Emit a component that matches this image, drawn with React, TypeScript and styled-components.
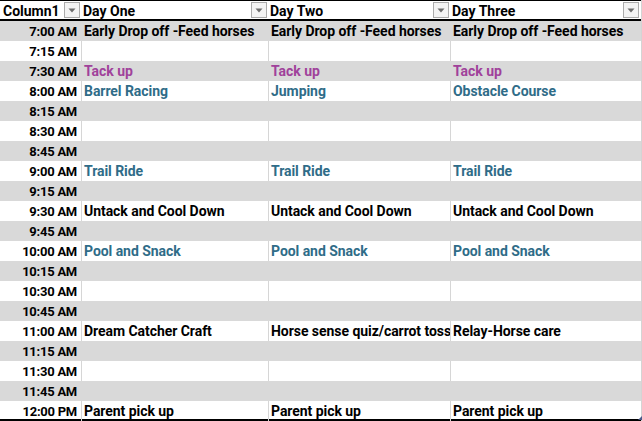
import styled, { createGlobalStyle } from "styled-components";

type Tone = "plain" | "tack" | "activity";

interface Slot {
  time: string;
  cells?: [string, string, string];
  tone?: Tone;
}

const slots: Slot[] = [
  { time: "7:00 AM", cells: ["Early Drop off -Feed horses", "Early Drop off -Feed horses", "Early Drop off -Feed horses"], tone: "plain" },
  { time: "7:15 AM" },
  { time: "7:30 AM", cells: ["Tack up", "Tack up", "Tack up"], tone: "tack" },
  { time: "8:00 AM", cells: ["Barrel Racing", "Jumping", "Obstacle Course"], tone: "activity" },
  { time: "8:15 AM" },
  { time: "8:30 AM" },
  { time: "8:45 AM" },
  { time: "9:00 AM", cells: ["Trail Ride", "Trail Ride", "Trail Ride"], tone: "activity" },
  { time: "9:15 AM" },
  { time: "9:30 AM", cells: ["Untack and Cool Down", "Untack and Cool Down", "Untack and Cool Down"], tone: "plain" },
  { time: "9:45 AM" },
  { time: "10:00 AM", cells: ["Pool and Snack", "Pool and Snack", "Pool and Snack"], tone: "activity" },
  { time: "10:15 AM" },
  { time: "10:30 AM" },
  { time: "10:45 AM" },
  { time: "11:00 AM", cells: ["Dream Catcher Craft", "Horse sense quiz/carrot toss", "Relay-Horse care"], tone: "plain" },
  { time: "11:15 AM" },
  { time: "11:30 AM" },
  { time: "11:45 AM" },
  { time: "12:00 PM", cells: ["Parent pick up", "Parent pick up", "Parent pick up"], tone: "plain" },
];

const headers = ["Column1", "Day One", "Day Two", "Day Three"];

const toneColors: Record<Tone, string> = {
  plain: "#000000",
  tack: "#a0419b",
  activity: "#2f6c88",
};

const GlobalStyle = createGlobalStyle`
  body {
    margin: 0;
    background: #ffffff;
    font-family: Roboto, "Liberation Sans", sans-serif;
  }
`;

const Sheet = styled.div`
  position: relative;
  width: 641px;
  border-right: 1px solid #d4d4d4;
`;

const Row = styled.div<{ $shaded?: boolean; $last?: boolean }>`
  display: grid;
  grid-template-columns: 81px 187px 182px 190px;
  height: 20px;
  box-sizing: border-box;
  background: ${(p) => (p.$shaded ? "#d9d9d9" : "#ffffff")};
  border-bottom: ${(p) => (p.$last ? "2px solid #000" : "none")};
`;

const HeaderRow = styled(Row)`
  height: 21px;
  border-top: 1px solid #000;
  border-bottom: 2px solid #000;
`;

const HeaderCell = styled.div`
  display: flex;
  align-items: center;
  justify-content: space-between;
  padding: 0 1px 0 3px;
  font-size: 14px;
  font-weight: 700;
  color: #000;
  white-space: nowrap;
  overflow: hidden;
  & + & {
    padding-left: 2px;
  }
`;

const HeaderLabel = styled.span`
  margin-top: 2px;
`;

const FilterButton = styled.span`
  display: flex;
  align-items: center;
  justify-content: center;
  width: 16px;
  height: 16px;
  box-sizing: border-box;
  border: 1px solid #ababab;
  background: #f3f3f3;
  flex-shrink: 0;
`;

const TimeCell = styled.div`
  padding-right: 4px;
  text-align: right;
  font-size: 13px;
  letter-spacing: -0.25px;
  font-weight: 700;
  line-height: 21px;
  color: #000;
  white-space: nowrap;
`;

const DayCell = styled.div<{ $shaded?: boolean; $color: string }>`
  padding-left: 2px;
  border-left: 1px solid ${(p) => (p.$shaded ? "#d9d9d9" : "#d6d6d6")};
  font-size: 14px;
  font-weight: 700;
  letter-spacing: -0.05px;
  line-height: 21px;
  color: ${(p) => p.$color};
  white-space: nowrap;
  overflow: visible;
  min-width: 0;
`;

const ResizeGrip = styled.span`
  position: absolute;
  right: -1px;
  bottom: 1px;
  width: 0;
  height: 0;
  border-left: 4px solid transparent;
  border-bottom: 4px solid #4a5a8a;
`;

function Caret() {
  return (
    <svg width="8" height="5" viewBox="0 0 8 5">
      <path d="M0.5 0.5 L7.5 0.5 L4 4.5 Z" fill="#6e6e6e" />
    </svg>
  );
}

export default function App() {
  return (
    <>
      <GlobalStyle />
      <Sheet>
        <HeaderRow>
          {headers.map((h) => (
            <HeaderCell key={h}>
              <HeaderLabel>{h}</HeaderLabel>
              <FilterButton>
                <Caret />
              </FilterButton>
            </HeaderCell>
          ))}
        </HeaderRow>
        {slots.map((slot, i) => {
          const shaded = i % 2 === 0;
          const color = toneColors[slot.tone ?? "plain"];
          return (
            <Row key={slot.time} $shaded={shaded} $last={i === slots.length - 1}>
              <TimeCell>{slot.time}</TimeCell>
              {[0, 1, 2].map((c) => (
                <DayCell key={c} $shaded={shaded} $color={color}>
                  {slot.cells ? slot.cells[c] : ""}
                </DayCell>
              ))}
            </Row>
          );
        })}
        <ResizeGrip />
      </Sheet>
    </>
  );
}
